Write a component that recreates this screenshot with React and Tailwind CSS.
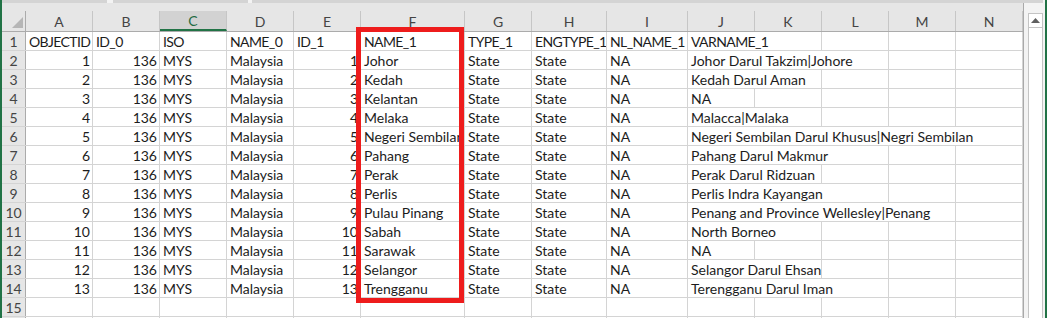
import React from 'react';
import clsx from 'clsx';

const cols = [
  { k: 'A', w: 'w-[67px]' },
  { k: 'B', w: 'w-[67px]' },
  { k: 'C', w: 'w-[67px]', sel: true },
  { k: 'D', w: 'w-[67px]' },
  { k: 'E', w: 'w-[67px]' },
  { k: 'F', w: 'w-[104px]' },
  { k: 'G', w: 'w-[67px]' },
  { k: 'H', w: 'w-[75px]' },
  { k: 'I', w: 'w-[81px]' },
  { k: 'J', w: 'w-[67px]' },
  { k: 'K', w: 'w-[67px]' },
  { k: 'L', w: 'w-[67px]' },
  { k: 'M', w: 'w-[67px]' },
  { k: 'N', w: 'w-[67px]' },
];

// width of column J when its text spills into K, L, M, N
const spanW = ['w-[67px]', 'w-[134px]', 'w-[201px]', 'w-[268px]', 'w-[335px]'];

const states = [
  ['Johor', 'Johor Darul Takzim|Johore', 3],
  ['Kedah', 'Kedah Darul Aman', 2],
  ['Kelantan', 'NA', 1],
  ['Melaka', 'Malacca|Malaka', 2],
  ['Negeri Sembilan', 'Negeri Sembilan Darul Khusus|Negri Sembilan', 5],
  ['Pahang', 'Pahang Darul Makmur', 3],
  ['Perak', 'Perak Darul Ridzuan', 2],
  ['Perlis', 'Perlis Indra Kayangan', 3],
  ['Pulau Pinang', 'Penang and Province Wellesley|Penang', 4],
  ['Sabah', 'North Borneo', 2],
  ['Sarawak', 'NA', 1],
  ['Selangor', 'Selangor Darul Ehsan', 2],
  ['Trengganu', 'Terengganu Darul Iman', 3],
];

const blank = ['', '', '', '', '', '', '', '', '', ''];

function Cell({ w, right, children }) {
  return (
    <div
      className={clsx(
        'h-full shrink-0 border-r border-[#d4d4d4] overflow-hidden whitespace-nowrap flex items-center pt-[1px]',
        w,
        right ? 'justify-end pr-[2px]' : 'pl-[3px]'
      )}
    >
      {children}
    </div>
  );
}

function RowHead({ n }) {
  return (
    <div className="w-[24px] h-full shrink-0 bg-[#e6e6e6] border-r border-[#ababab] flex items-center justify-center pt-[1px] text-[#444] tracking-normal">
      {n}
    </div>
  );
}

function Row({ n, cells, span = 1, tight }) {
  const rest = 5 - span;
  return (
    <div className={clsx('flex h-[19px] shrink-0 border-b border-[#d4d4d4]', tight && 'tracking-[-0.6px]')}>
      <RowHead n={n} />
      {cells.slice(0, 9).map((c, i) => (
        <Cell key={i} w={cols[i].w} right={typeof c === 'number'}>
          {c}
        </Cell>
      ))}
      <Cell w={spanW[span - 1]}>{cells[9]}</Cell>
      {Array.from({ length: rest }).map((_, i) => (
        <Cell key={'e' + i} w="w-[67px]" />
      ))}
    </div>
  );
}

export default function App() {
  return (
    <div className="w-[1047px] h-[318px] overflow-hidden flex bg-white text-[14px] text-[#1c1c1c] font-['Lato',sans-serif]">
      <div className="w-[2px] shrink-0 bg-[#217346]" />
      <div className="flex flex-col w-[1043px] shrink-0">
        <div className="h-[3px] shrink-0 flex bg-[#f3f3f3]">
          <div className="w-[105px] bg-[#d4d4d4]" />
          <div className="w-[6px]" />
          <div className="w-[135px] bg-[#d4d4d4]" />
          <div className="w-[4px]" />
          <div className="w-[791px] bg-[#d4d4d4]" />
        </div>
        <div className="flex flex-1 min-h-0">
          <div className="w-[1022px] shrink-0 flex flex-col bg-[#e6e6e6] border-r border-[#a9a9a9]">
            <div className="h-[8px] shrink-0" />
            <div className="flex h-[21px] shrink-0 border-b border-[#ababab] text-[#444]">
              <div className="w-[24px] shrink-0 border-r border-[#ababab]">
                <svg width="24" height="20" viewBox="0 0 24 20">
                  <polygon points="21,6 21,17 10,17" fill="#b6b6b6" />
                </svg>
              </div>
              {cols.map((c) => (
                <div
                  key={c.k}
                  className={clsx(
                    'shrink-0 flex items-center justify-center pt-[1px]',
                    c.w,
                    c.sel
                      ? 'bg-[#d2d2d2] border-b-2 border-[#217346] text-[#1e6b43] border-r border-r-[#c6c6c6]'
                      : 'border-r border-[#c6c6c6]'
                  )}
                >
                  {c.k}
                </div>
              ))}
            </div>
            <div className="flex flex-col flex-1 bg-white">
              <Row
                n={1}
                span={2}
                tight
                cells={['OBJECTID', 'ID_0', 'ISO', 'NAME_0', 'ID_1', 'NAME_1', 'TYPE_1', 'ENGTYPE_1', 'NL_NAME_1', 'VARNAME_1']}
              />
              {states.map(([name, varname, span], i) => (
                <Row
                  key={name}
                  n={i + 2}
                  span={span}
                  cells={[i + 1, 136, 'MYS', 'Malaysia', i + 1, name, 'State', 'State', 'NA', varname]}
                />
              ))}
              <Row n={15} cells={blank} />
              <Row n="" cells={blank} />
            </div>
          </div>
          <div className="w-[21px] shrink-0 flex flex-col bg-[#f3f3f3] pl-[4px] pt-[10px]">
            <div className="w-[15px] h-[15px] shrink-0 bg-white border border-[#c4c4c4] flex items-center justify-center">
              <svg width="9" height="5" viewBox="0 0 9 5">
                <polygon points="4.5,0 9,5 0,5" fill="#606060" />
              </svg>
            </div>
            <div className="w-[15px] flex-1 bg-white border-x border-[#c4c4c4]" />
          </div>
        </div>
      </div>
      <div className="w-[2px] shrink-0 bg-[#217346]" />
      <div className="absolute left-[356px] top-[27px] w-[108px] h-[276px] border-[5px] border-[#ee1c1c] pointer-events-none" />
    </div>
  );
}
